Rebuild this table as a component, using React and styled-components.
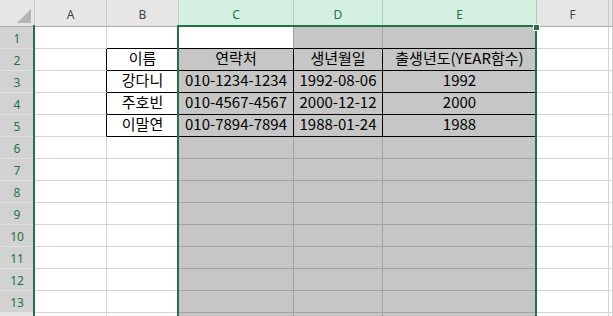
import styled, { createGlobalStyle } from "styled-components";

const GlobalStyle = createGlobalStyle`
  html, body {
    margin: 0;
    padding: 0;
    background: #ffffff;
    overflow: hidden;
  }
`;

// G only peeks in at the right edge, so its letter stays off
const COLS = ["A", "B", "C", "D", "E", "F", ""];
const SELECTED_COLS = [2, 3, 4];

const data = [
  ["", "", "", "", ""],
  ["", "이름", "연락처", "생년월일", "출생년도(YEAR함수)"],
  ["", "강다니", "010-1234-1234", "1992-08-06", "1992"],
  ["", "주호빈", "010-4567-4567", "2000-12-12", "2000"],
  ["", "이말연", "010-7894-7894", "1988-01-24", "1988"],
];

const ROW_COUNT = 14;
const LABELED_ROWS = 13;

const GRID = "#d4d4d4";
const GRID_SEL = "#a3a3a3";
const INK = "#000000";
const GREEN = "#217346";

const Sheet = styled.div`
  position: relative;
  display: grid;
  grid-template-columns: 35px 72px 72px 115px 89px 154px 72px 1fr;
  grid-template-rows: 27px repeat(${ROW_COUNT}, 22px);
  width: 613px;
  height: 316px;
  overflow: hidden;
  font-family: "Noto Sans CJK KR", "Noto Sans", sans-serif;
`;

const Corner = styled.div`
  position: relative;
  box-sizing: border-box;
  background: #e6e6e6;
  border-right: 1px solid #c6c6c6;
  border-bottom: 1px solid #ababab;

  &::after {
    content: "";
    position: absolute;
    right: 3px;
    bottom: 3px;
    width: 14px;
    height: 14px;
    background: #b4b4b4;
    clip-path: polygon(100% 0, 100% 100%, 0 100%);
  }
`;

const ColHeader = styled.div`
  box-sizing: border-box;
  display: flex;
  align-items: center;
  justify-content: center;
  padding-top: 2px;
  background: ${(p) => (p.$active ? "#d3f0e0" : "#e6e6e6")};
  color: ${(p) => (p.$active ? GREEN : "#444444")};
  border-right: 1px solid ${(p) => (p.$active ? "#9fd5b7" : "#c6c6c6")};
  border-bottom: 1px solid #ababab;
  font-family: "Noto Sans", "Liberation Sans", sans-serif;
  font-size: 12px;
`;

const RowHeader = styled.div`
  box-sizing: border-box;
  display: flex;
  align-items: center;
  justify-content: center;
  padding-top: 1px;
  background: ${(p) => (p.$active ? "#d2d2d2" : "#e6e6e6")};
  color: ${(p) => (p.$active ? GREEN : "#444444")};
  border-right: 1px solid #ababab;
  border-bottom: 1px solid #e1e1e1;
  font-family: "Noto Sans", "Liberation Sans", sans-serif;
  font-size: 12px;
`;

const Cell = styled.div`
  box-sizing: border-box;
  display: flex;
  align-items: flex-end;
  justify-content: center;
  padding-bottom: 5px;
  background: ${(p) => (p.$sel ? "#c6c6c6" : "#ffffff")};
  border-right: 1px solid ${(p) => p.$right};
  border-bottom: 1px solid ${(p) => p.$bottom};
  color: #000000;
  font-size: 15px;
  line-height: 1;
  white-space: nowrap;
`;

/* selection outline and the extra frame line beside column A */
const SelectionFrame = styled.div`
  position: absolute;
  left: 177px;
  top: 25px;
  width: 360px;
  height: 320px;
  box-sizing: border-box;
  border: 2px solid ${GREEN};
  pointer-events: none;
`;

const FillHandle = styled.div`
  position: absolute;
  left: 533px;
  top: 24px;
  width: 5px;
  height: 5px;
  background: ${GREEN};
  border: 1px solid #ffffff;
`;

const SideLine = styled.div`
  position: absolute;
  left: 33px;
  top: 25px;
  width: 2px;
  height: 300px;
  background: ${GREEN};
`;

const inTable = (r, c) => r >= 2 && r <= 5 && c >= 1 && c <= 4;

function cellStyle(r, c) {
  const sel = SELECTED_COLS.includes(c) && !(r === 1 && c === 2);
  const nextSel = SELECTED_COLS.includes(c + 1);

  let right = GRID;
  if (inTable(r, c) || inTable(r, c + 1)) right = INK;
  else if (sel || (nextSel && c + 1 !== 2)) right = GRID_SEL;
  else if (r === 1 && c === 2) right = GRID_SEL;

  let bottom = GRID;
  if (inTable(r, c) || inTable(r + 1, c)) bottom = INK;
  else if (sel) bottom = GRID_SEL;

  return { sel, right, bottom };
}

export default function App() {
  const rows = Array.from({ length: ROW_COUNT }, (_, i) => i + 1);

  return (
    <>
      <GlobalStyle />
      <Sheet>
        <Corner />
        {COLS.map((name, c) => (
          <ColHeader key={c} $active={SELECTED_COLS.includes(c)}>
            {name}
          </ColHeader>
        ))}

        {rows.map((r) => (
          <Row key={r} r={r} />
        ))}

        <SideLine />
        <SelectionFrame />
        <FillHandle />
      </Sheet>
    </>
  );
}

function Row({ r }) {
  const values = data[r - 1] || [];
  return (
    <>
      <RowHeader $active={r <= LABELED_ROWS}>
        {r <= LABELED_ROWS ? r : ""}
      </RowHeader>
      {COLS.map((name, c) => {
        const { sel, right, bottom } = cellStyle(r, c);
        return (
          <Cell key={c} $sel={sel} $right={right} $bottom={bottom}>
            {values[c] || ""}
          </Cell>
        );
      })}
    </>
  );
}
